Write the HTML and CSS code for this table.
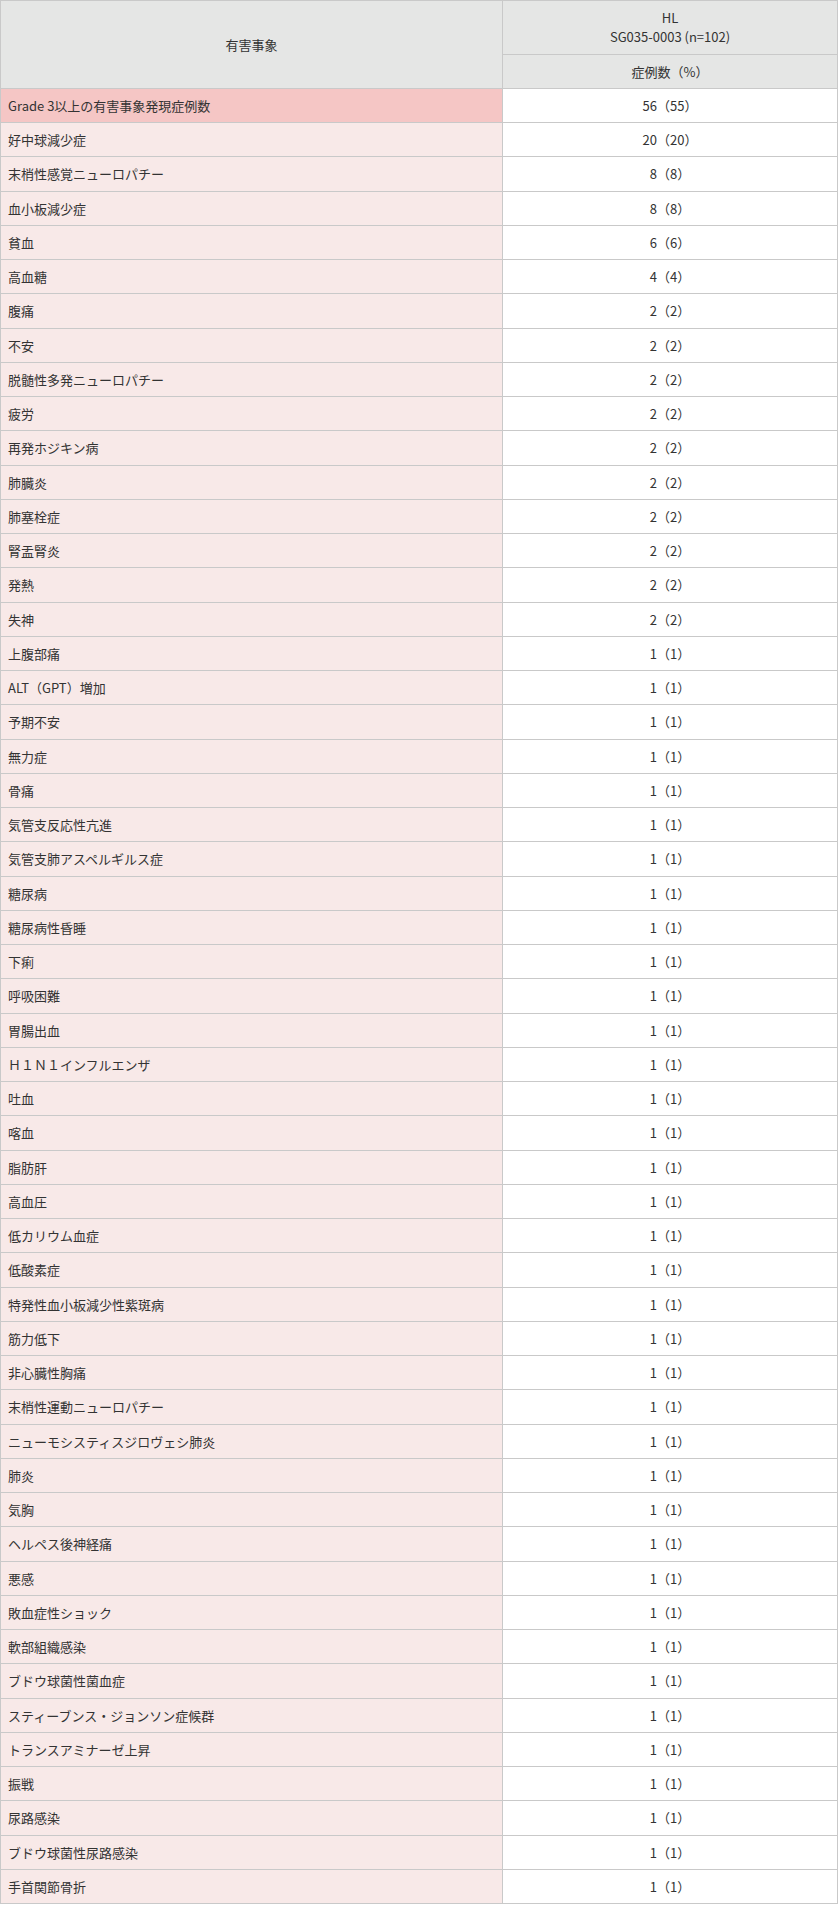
FILE: index.html
```html
<!DOCTYPE html>
<html lang="ja">
<head>
  <meta charset="UTF-8">
  <meta name="viewport" content="width=device-width, initial-scale=1.0">
  <title>有害事象</title>
  <link rel="stylesheet" href="styles.css">
</head>
<body>

  <!-- Adverse events table -->
  <table class="ae-table">
    <thead>
      <tr>
        <th rowspan="2" class="col-name">有害事象</th>
        <th>HL<br>SG035-0003 (n=102)</th>
      </tr>
      <tr>
        <th>症例数（%）</th>
      </tr>
    </thead>
    <tbody>
      <tr class="total"><td class="name">Grade 3以上の有害事象発現症例数</td><td>56（55）</td></tr>
      <tr><td class="name">好中球減少症</td><td>20（20）</td></tr>
      <tr><td class="name">末梢性感覚ニューロパチー</td><td>8（8）</td></tr>
      <tr><td class="name">血小板減少症</td><td>8（8）</td></tr>
      <tr><td class="name">貧血</td><td>6（6）</td></tr>
      <tr><td class="name">高血糖</td><td>4（4）</td></tr>
      <tr><td class="name">腹痛</td><td>2（2）</td></tr>
      <tr><td class="name">不安</td><td>2（2）</td></tr>
      <tr><td class="name">脱髄性多発ニューロパチー</td><td>2（2）</td></tr>
      <tr><td class="name">疲労</td><td>2（2）</td></tr>
      <tr><td class="name">再発ホジキン病</td><td>2（2）</td></tr>
      <tr><td class="name">肺臓炎</td><td>2（2）</td></tr>
      <tr><td class="name">肺塞栓症</td><td>2（2）</td></tr>
      <tr><td class="name">腎盂腎炎</td><td>2（2）</td></tr>
      <tr><td class="name">発熱</td><td>2（2）</td></tr>
      <tr><td class="name">失神</td><td>2（2）</td></tr>
      <tr><td class="name">上腹部痛</td><td>1（1）</td></tr>
      <tr><td class="name">ALT（GPT）増加</td><td>1（1）</td></tr>
      <tr><td class="name">予期不安</td><td>1（1）</td></tr>
      <tr><td class="name">無力症</td><td>1（1）</td></tr>
      <tr><td class="name">骨痛</td><td>1（1）</td></tr>
      <tr><td class="name">気管支反応性亢進</td><td>1（1）</td></tr>
      <tr><td class="name">気管支肺アスペルギルス症</td><td>1（1）</td></tr>
      <tr><td class="name">糖尿病</td><td>1（1）</td></tr>
      <tr><td class="name">糖尿病性昏睡</td><td>1（1）</td></tr>
      <tr><td class="name">下痢</td><td>1（1）</td></tr>
      <tr><td class="name">呼吸困難</td><td>1（1）</td></tr>
      <tr><td class="name">胃腸出血</td><td>1（1）</td></tr>
      <tr><td class="name">Ｈ１Ｎ１インフルエンザ</td><td>1（1）</td></tr>
      <tr><td class="name">吐血</td><td>1（1）</td></tr>
      <tr><td class="name">喀血</td><td>1（1）</td></tr>
      <tr><td class="name">脂肪肝</td><td>1（1）</td></tr>
      <tr><td class="name">高血圧</td><td>1（1）</td></tr>
      <tr><td class="name">低カリウム血症</td><td>1（1）</td></tr>
      <tr><td class="name">低酸素症</td><td>1（1）</td></tr>
      <tr><td class="name">特発性血小板減少性紫斑病</td><td>1（1）</td></tr>
      <tr><td class="name">筋力低下</td><td>1（1）</td></tr>
      <tr><td class="name">非心臓性胸痛</td><td>1（1）</td></tr>
      <tr><td class="name">末梢性運動ニューロパチー</td><td>1（1）</td></tr>
      <tr><td class="name">ニューモシスティスジロヴェシ肺炎</td><td>1（1）</td></tr>
      <tr><td class="name">肺炎</td><td>1（1）</td></tr>
      <tr><td class="name">気胸</td><td>1（1）</td></tr>
      <tr><td class="name">ヘルペス後神経痛</td><td>1（1）</td></tr>
      <tr><td class="name">悪感</td><td>1（1）</td></tr>
      <tr><td class="name">敗血症性ショック</td><td>1（1）</td></tr>
      <tr><td class="name">軟部組織感染</td><td>1（1）</td></tr>
      <tr><td class="name">ブドウ球菌性菌血症</td><td>1（1）</td></tr>
      <tr><td class="name">スティーブンス・ジョンソン症候群</td><td>1（1）</td></tr>
      <tr><td class="name">トランスアミナーゼ上昇</td><td>1（1）</td></tr>
      <tr><td class="name">振戦</td><td>1（1）</td></tr>
      <tr><td class="name">尿路感染</td><td>1（1）</td></tr>
      <tr><td class="name">ブドウ球菌性尿路感染</td><td>1（1）</td></tr>
      <tr><td class="name">手首関節骨折</td><td>1（1）</td></tr>
    </tbody>
  </table>

</body>
</html>
```

FILE: styles.css
```css
body {
  margin: 0;
  padding: 0;
  background: #fff;
  color: #333;
  font-family: "Noto Sans CJK JP", "Noto Sans", sans-serif;
  font-size: 13px;
}

.ae-table {
  width: 838px;
  border-collapse: collapse;
  table-layout: fixed;
}

.ae-table th,
.ae-table td {
  border: 1px solid #c9c9c9;
  padding: 7px 7px;
  line-height: 19.25px;
  text-align: center;
  font-weight: normal;
}

.ae-table th {
  background: #e5e6e5;
}

.ae-table .col-name {
  width: 487px;
}

.ae-table td.name {
  text-align: left;
  background: #f8e9e8;
}

.ae-table tr.total td.name {
  background: #f5c6c5;
}
```
